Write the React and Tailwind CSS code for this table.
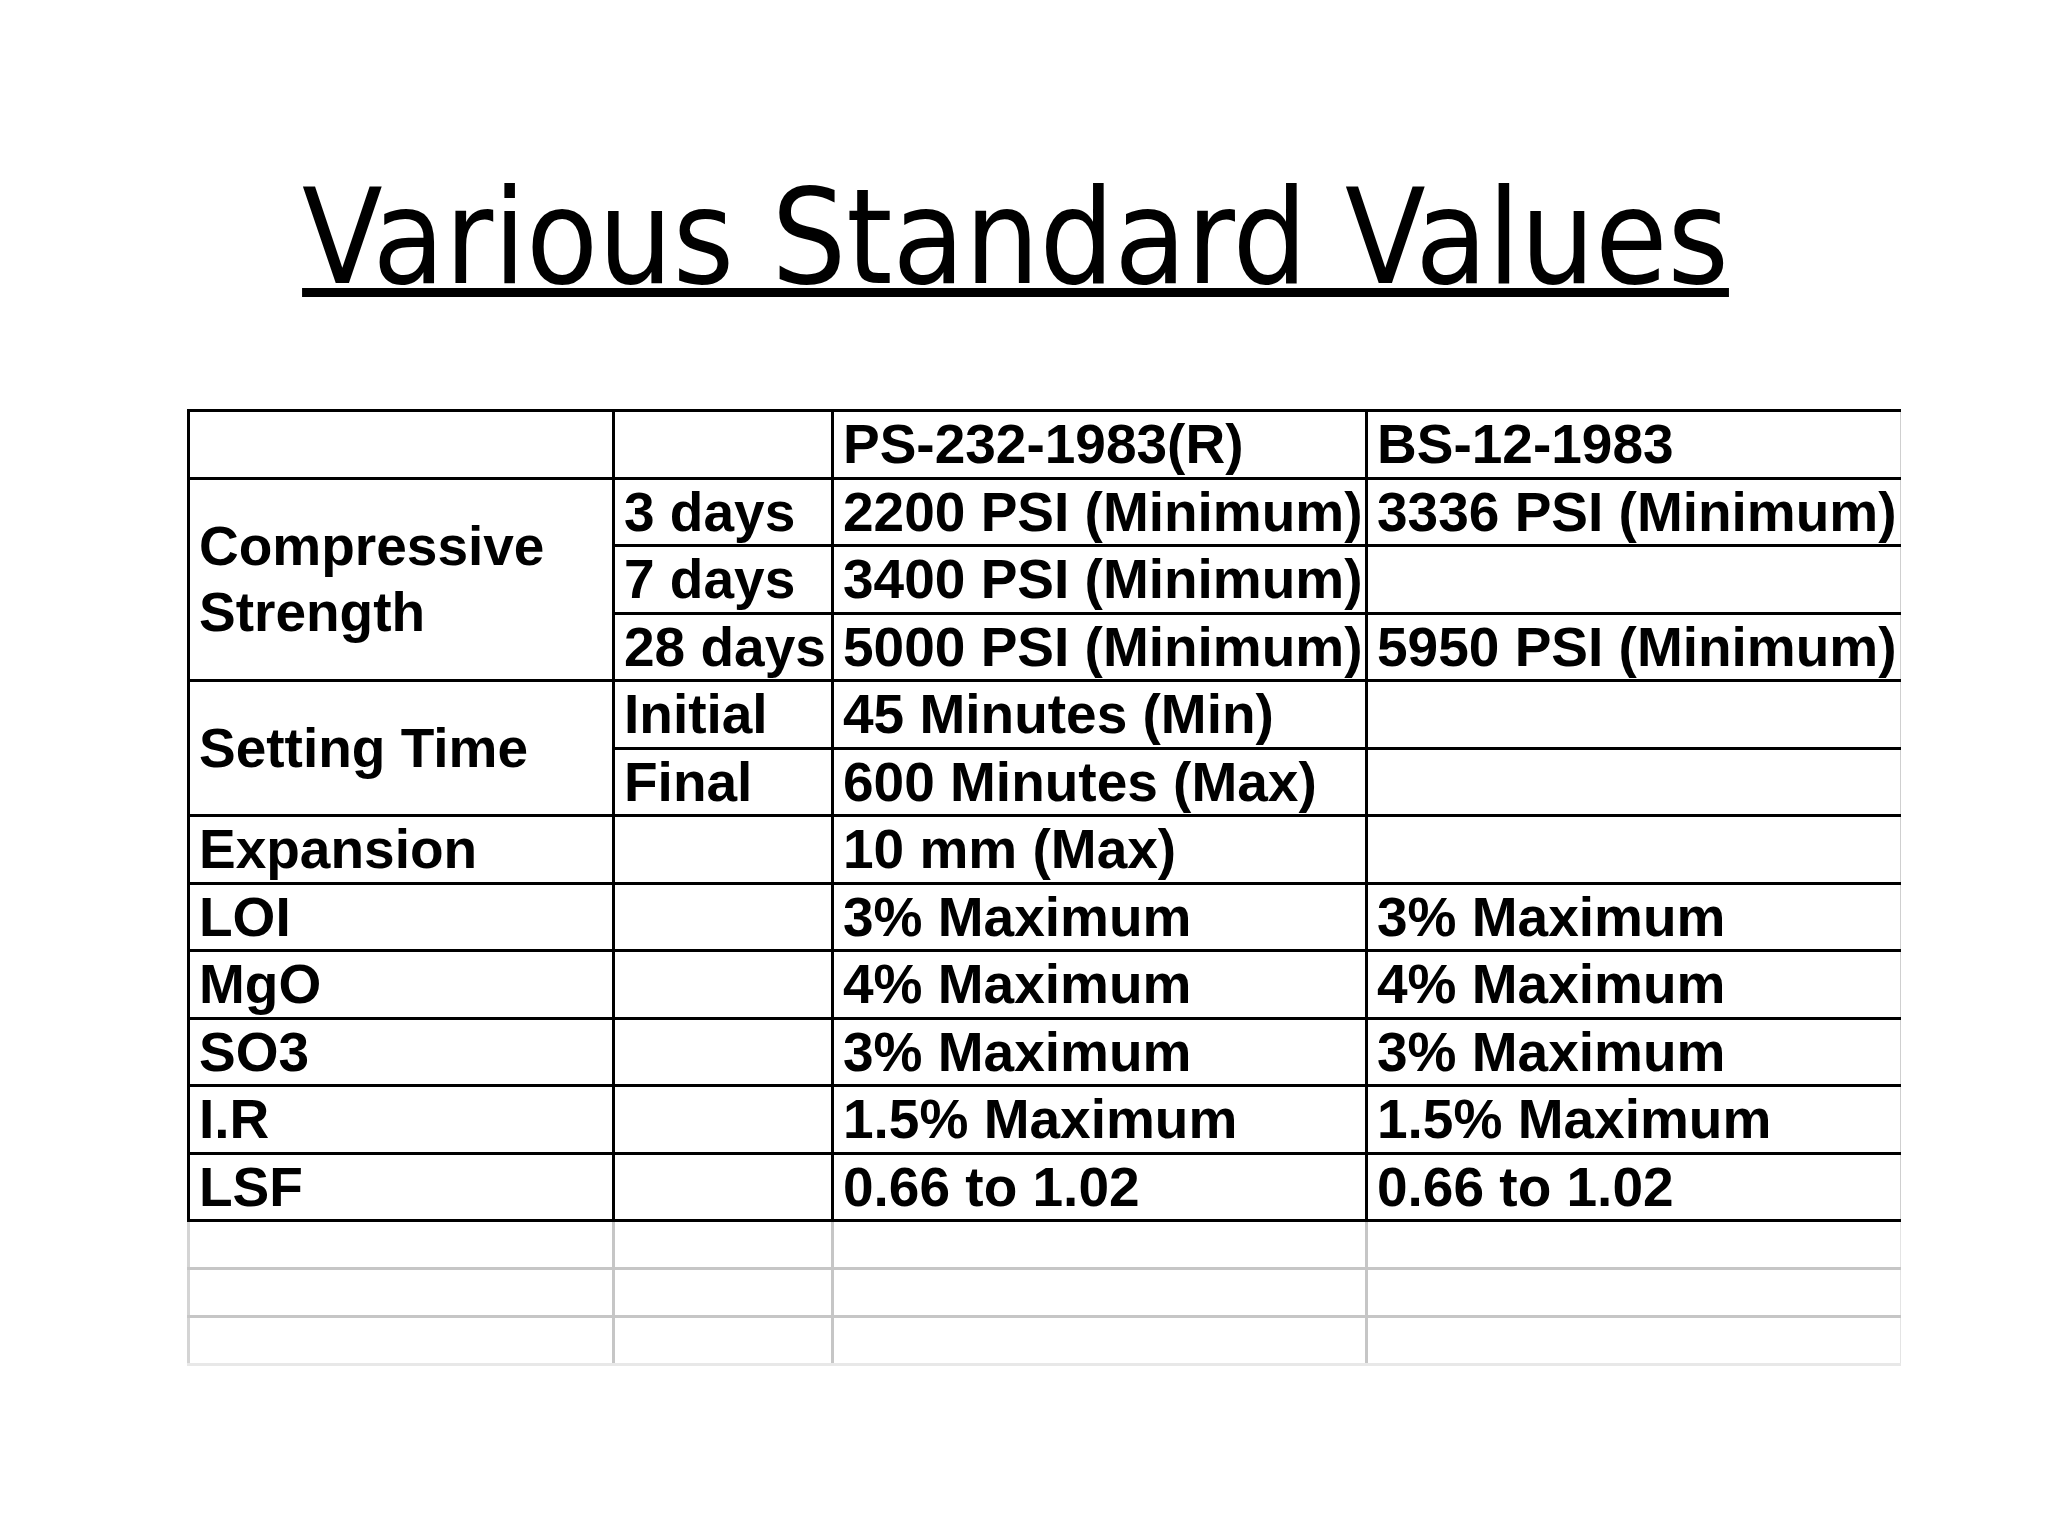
import React from "react";

const rows = [
  { cells: [{ text: "" }, { text: "" }, { text: "PS-232-1983(R)" }, { text: "BS-12-1983" }] },
  {
    cells: [
      { text: "Compressive Strength", rowSpan: 3, wrap: true },
      { text: "3 days" },
      { text: "2200 PSI (Minimum)" },
      { text: "3336 PSI (Minimum)" },
    ],
  },
  { cells: [{ text: "7 days" }, { text: "3400 PSI (Minimum)" }, { text: "" }] },
  { cells: [{ text: "28 days" }, { text: "5000 PSI (Minimum)" }, { text: "5950 PSI (Minimum)" }] },
  {
    cells: [
      { text: "Setting Time", rowSpan: 2 },
      { text: "Initial" },
      { text: "45 Minutes (Min)" },
      { text: "" },
    ],
  },
  { cells: [{ text: "Final" }, { text: "600 Minutes (Max)" }, { text: "" }] },
  { cells: [{ text: "Expansion" }, { text: "" }, { text: "10 mm (Max)" }, { text: "" }] },
  { cells: [{ text: "LOI" }, { text: "" }, { text: "3% Maximum" }, { text: "3% Maximum" }] },
  { cells: [{ text: "MgO" }, { text: "" }, { text: "4% Maximum" }, { text: "4% Maximum" }] },
  { cells: [{ text: "SO3" }, { text: "" }, { text: "3% Maximum" }, { text: "3% Maximum" }] },
  { cells: [{ text: "I.R" }, { text: "" }, { text: "1.5% Maximum" }, { text: "1.5% Maximum" }] },
  { cells: [{ text: "LSF" }, { text: "" }, { text: "0.66 to 1.02" }, { text: "0.66 to 1.02" }] },
];

function App() {
  return (
    <div className="min-h-screen w-full bg-white text-black">
      {/* title */}
      <div className="flex justify-center pt-[172px] pr-[17px]">
        <h1
          className="text-[131px] font-normal leading-none underline decoration-[length:9px] underline-offset-[5px]"
          style={{ fontFamily: '"Comic Sans MS", "DejaVu Sans Condensed", "Liberation Sans", sans-serif' }}
        >
          Various Standard Values
        </h1>
      </div>

      {/* table */}
      <div className="pl-[187px] mt-[106px]">
        <table
          className="table-fixed border-collapse w-[1712px] text-[55px] font-bold"
          style={{ fontFamily: '"Liberation Sans", Arial, sans-serif' }}
        >
          <colgroup>
            <col className="w-[425px]" />
            <col className="w-[219px]" />
            <col className="w-[534px]" />
            <col className="w-[534px]" />
          </colgroup>
          <tbody>
            {rows.map((row, i) => (
              <tr key={i} className="h-[67.5px]">
                {row.cells.map((c, j) => {
                  const last = j === row.cells.length - 1;
                  return (
                    <td
                      key={j}
                      rowSpan={c.rowSpan}
                      className={
                        "border-[3px] border-black pl-[9px] pr-[8px] align-middle " +
                        (c.wrap ? "leading-[66px] " : "whitespace-nowrap leading-[62px] ") +
                        (last ? "border-r-[1px] border-r-[#cfcfcf]" : "")
                      }
                    >
                      {c.wrap ? (
                        <>
                          Compressive
                          <br />
                          Strength
                        </>
                      ) : (
                        c.text
                      )}
                    </td>
                  );
                })}
              </tr>
            ))}
            {[0, 1, 2].map((k) => (
              <tr key={"g" + k} className="h-[48px]">
                {[0, 1, 2, 3].map((j) => (
                  <td
                    key={j}
                    className={
                      "border-x-[3px] border-b-[3px] border-t-0 border-[#c6c6c6] " +
                      (k === 2 ? "border-b-[#e8e8e8] " : "") +
                      (j === 0 ? "border-l-[#d4d4d4] " : "") +
                      (j === 3 ? "border-r-[1px] border-r-[#e4e4e4]" : "")
                    }
                  ></td>
                ))}
              </tr>
            ))}
          </tbody>
        </table>
      </div>
    </div>
  );
}

export default App;
